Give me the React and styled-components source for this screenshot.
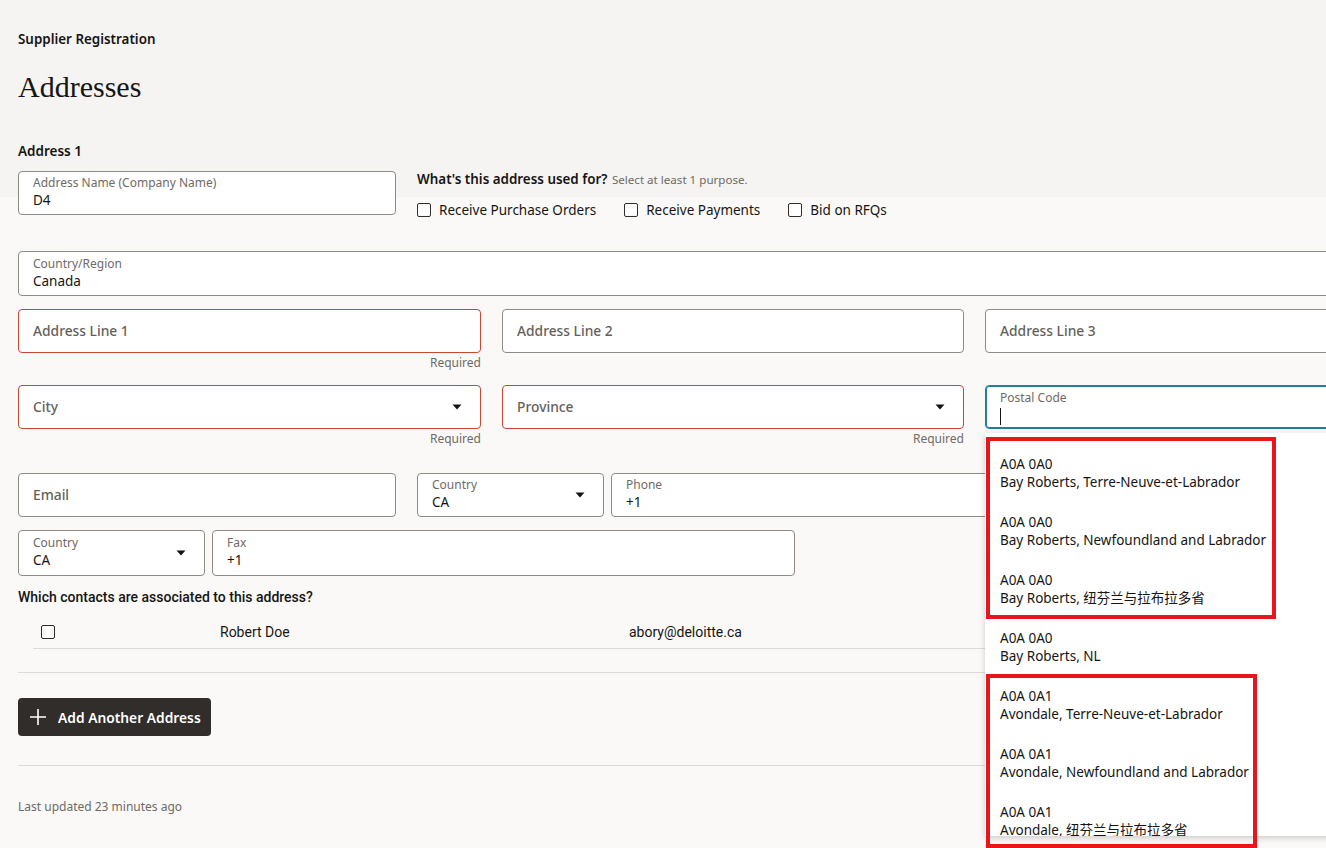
import React from "react";
import styled, { createGlobalStyle } from "styled-components";

const GlobalStyle = createGlobalStyle`
  html, body {
    margin: 0;
    padding: 0;
    width: 1326px;
    height: 848px;
    overflow: hidden;
  }
  body {
    font-family: "Noto Sans", "Open Sans", "Noto Sans CJK SC", sans-serif;
    color: #161513;
    background: #faf9f8;
  }
`;

const Page = styled.div`
  width: 1430px;
  height: 848px;
  box-sizing: border-box;
  padding: 29px 0 0 18px;
  background: linear-gradient(#f5f4f2 0, #f5f4f2 197px, #faf9f8 197px);
`;

const Breadcrumb = styled.div`
  font-size: 13.4px;
  font-weight: 600;
  line-height: 20px;
`;

const Title = styled.h1`
  margin: 20px 0 0;
  font-family: "Liberation Serif", "DejaVu Serif", serif;
  font-weight: 400;
  font-size: 30px;
  line-height: 36px;
`;

const SectionTitle = styled.div`
  margin-top: 36px;
  font-size: 13.5px;
  font-weight: 600;
  line-height: 20px;
`;

const Row = styled.div`
  display: flex;
  align-items: flex-start;
  gap: ${(p) => p.$gap || 21}px;
  margin-top: ${(p) => p.$top || 0}px;
  flex: ${(p) => (p.$grow ? 1 : "none")};
`;

const Grid = styled.div`
  display: grid;
  grid-template-columns: 463px 462px 463px;
  column-gap: 21px;
  margin-top: ${(p) => p.$top || 0}px;
`;

const Cell = styled.div`
  position: relative;
  display: flex;
  flex-direction: column;
  width: ${(p) => (p.$w ? `${p.$w}px` : "auto")};
  flex: ${(p) => (p.$grow ? 1 : "none")};
`;

const FieldBox = styled.div`
  box-sizing: border-box;
  height: ${(p) => p.$h || 44}px;
  background: #fff;
  border: 1px solid ${(p) => (p.$error ? "#c74634" : p.$focus ? "#227e9e" : "#8e8a86")};
  box-shadow: ${(p) => (p.$focus ? "inset 0 0 0 1px #227e9e" : "none")};
  border-radius: 4px;
  padding: 0 18px 0 14px;
  display: flex;
  align-items: center;
  gap: 10px;
`;

const FieldText = styled.div`
  flex: 1;
  display: flex;
  flex-direction: column;
  min-width: 0;
`;

const Label = styled.div`
  font-size: 12px;
  line-height: 16px;
  color: #6f6a64;
`;

const Value = styled.div`
  font-size: 13.5px;
  line-height: 18px;
  color: #161513;
  margin-bottom: 2px;
`;

const Placeholder = styled.div`
  font-size: 13.8px;
  font-weight: 500;
  line-height: 18px;
  color: #655f5a;
`;

const Cursor = styled.span`
  display: inline-block;
  width: 1px;
  height: 17px;
  background: #161513;
  margin-top: 2px;
`;

const Helper = styled.div`
  height: 20px;
  font-size: 12px;
  line-height: 20px;
  color: #6f6a64;
  text-align: right;
`;

const Caret = () => (
  <svg width="10" height="6" viewBox="0 0 10 6">
    <path d="M0.5 0.5h9L5 5.5z" fill="#161513" />
  </svg>
);

function Field({ label, value, placeholder, select, error, focus, cursor, h }) {
  return (
    <FieldBox $error={error} $focus={focus} $h={h}>
      <FieldText>
        {label && <Label>{label}</Label>}
        {value !== undefined && <Value>{value}</Value>}
        {cursor && <Cursor />}
        {placeholder && <Placeholder>{placeholder}</Placeholder>}
      </FieldText>
      {select && <Caret />}
    </FieldBox>
  );
}

const Purpose = styled.div`
  display: flex;
  flex-direction: column;
  height: 44px;
`;

const Question = styled.div`
  font-size: 13.4px;
  font-weight: 600;
  line-height: 18px;
  margin-top: -1px;
  span {
    font-size: 11.6px;
    font-weight: 400;
    color: #6f6a64;
    margin-left: 1px;
  }
`;

const Checks = styled.div`
  display: flex;
  gap: 28px;
  margin-top: 11px;
`;

const CheckItem = styled.label`
  display: flex;
  align-items: center;
  gap: 8px;
  font-size: 13.5px;
  line-height: 20px;
  color: #161513;
`;

const Box = styled.span`
  box-sizing: border-box;
  width: 14px;
  height: 14px;
  border: 1.5px solid #312d2a;
  border-radius: 2px;
  background: #fff;
  flex: none;
`;

const Popup = styled.div`
  position: absolute;
  top: 48px;
  left: 0;
  width: 463px;
  height: 403px;
  background: #fff;
  box-shadow: 0 2px 6px rgba(0, 0, 0, 0.18);
  overflow: hidden;
  padding-top: 11px;
  box-sizing: border-box;
  z-index: 2;
`;

const Option = styled.div`
  padding: 11px 15px;
  height: 58px;
  box-sizing: border-box;
  font-size: 13.5px;
  line-height: 18px;
  color: #161513;
  font-family: "Noto Sans", "Noto Sans CJK SC", sans-serif;
`;

const Mark = styled.div`
  position: absolute;
  left: 1px;
  top: ${(p) => p.$top}px;
  width: ${(p) => p.$w}px;
  height: ${(p) => p.$h}px;
  border: 4px solid #e8151b;
  box-sizing: border-box;
  z-index: 3;
  pointer-events: none;
`;

const ContactsTitle = styled.div`
  margin-top: 11px;
  font-family: "Roboto", "Noto Sans", sans-serif;
  font-size: 14px;
  font-weight: 500;
  line-height: 20px;
`;

const ContactRow = styled.div`
  display: grid;
  grid-template-columns: 179px 409px 1fr;
  align-items: center;
  height: 42px;
  box-sizing: border-box;
  padding: 9px 0 0 8px;
  margin-left: 15px;
  border-bottom: 1px solid #dedcda;
  font-family: "Roboto", "Noto Sans", sans-serif;
  font-size: 14px;
`;

const Divider = styled.div`
  height: 1px;
  background: #dedcda;
  margin-top: ${(p) => p.$top}px;
`;

const AddButton = styled.button`
  margin-top: 25px;
  display: flex;
  align-items: center;
  gap: 10px;
  height: 38px;
  width: 193px;
  padding: 0 0 0 10px;
  border: none;
  border-radius: 4px;
  background: #312d2a;
  color: #fff;
  font-family: "Noto Sans", sans-serif;
  font-size: 13.8px;
  font-weight: 600;
`;

const Footer = styled.div`
  margin-top: 33px;
  font-size: 12px;
  line-height: 16px;
  color: #6f6a64;
`;

const options = [
  ["A0A 0A0", "Bay Roberts, Terre-Neuve-et-Labrador"],
  ["A0A 0A0", "Bay Roberts, Newfoundland and Labrador"],
  ["A0A 0A0", "Bay Roberts, 纽芬兰与拉布拉多省"],
  ["A0A 0A0", "Bay Roberts, NL"],
  ["A0A 0A1", "Avondale, Terre-Neuve-et-Labrador"],
  ["A0A 0A1", "Avondale, Newfoundland and Labrador"],
  ["A0A 0A1", "Avondale, 纽芬兰与拉布拉多省"],
];

export default function App() {
  return (
    <>
      <GlobalStyle />
      <Page>
        <Breadcrumb>Supplier Registration</Breadcrumb>
        <Title>Addresses</Title>
        <SectionTitle>Address 1</SectionTitle>

        <Row $top={10}>
          <Cell $w={378}>
            <Field label="Address Name (Company Name)" value="D4" />
          </Cell>
          <Purpose>
            <Question>
              What's this address used for? <span>Select at least 1 purpose.</span>
            </Question>
            <Checks>
              <CheckItem><Box />Receive Purchase Orders</CheckItem>
              <CheckItem><Box />Receive Payments</CheckItem>
              <CheckItem><Box />Bid on RFQs</CheckItem>
            </Checks>
          </Purpose>
        </Row>

        <Row $top={36}>
          <Cell $grow>
            <Field label="Country/Region" value="Canada" h={45} />
          </Cell>
        </Row>

        <Grid $top={13}>
          <Cell>
            <Field placeholder="Address Line 1" error />
            <Helper>Required</Helper>
          </Cell>
          <Cell>
            <Field placeholder="Address Line 2" />
          </Cell>
          <Cell>
            <Field placeholder="Address Line 3" />
          </Cell>
        </Grid>

        <Grid $top={12}>
          <Cell>
            <Field placeholder="City" select error />
            <Helper>Required</Helper>
          </Cell>
          <Cell>
            <Field placeholder="Province" select error />
            <Helper>Required</Helper>
          </Cell>
          <Cell>
            <Field label="Postal Code" cursor focus />
            <Popup>
              {options.map(([code, place], i) => (
                <Option key={i}>
                  <div>{code}</div>
                  <div>{place}</div>
                </Option>
              ))}
            </Popup>
            <Mark $top={52} $w={290} $h={182} />
            <Mark $top={289} $w={271} $h={174} />
          </Cell>
        </Grid>

        <Row $top={24}>
          <Cell $w={378}>
            <Field placeholder="Email" />
          </Cell>
          <Row $gap={7} $grow>
            <Cell $w={187}>
              <Field label="Country" value="CA" select />
            </Cell>
            <Cell $grow>
              <Field label="Phone" value="+1" />
            </Cell>
          </Row>
        </Row>

        <Row $top={13} $gap={7}>
          <Cell $w={187}>
            <Field label="Country" value="CA" select h={46} />
          </Cell>
          <Cell $w={583}>
            <Field label="Fax" value="+1" h={46} />
          </Cell>
        </Row>

        <ContactsTitle>Which contacts are associated to this address?</ContactsTitle>
        <ContactRow>
          <Box />
          <span>Robert Doe</span>
          <span>abory@deloitte.ca</span>
        </ContactRow>
        <Divider $top={23} />

        <AddButton>
          <svg width="20" height="20" viewBox="0 0 20 20">
            <path d="M10 2v16M2 10h16" stroke="#fff" strokeWidth="1.6" />
          </svg>
          Add Another Address
        </AddButton>

        <Divider $top={29} />
        <Footer>Last updated 23 minutes ago</Footer>
      </Page>
    </>
  );
}
